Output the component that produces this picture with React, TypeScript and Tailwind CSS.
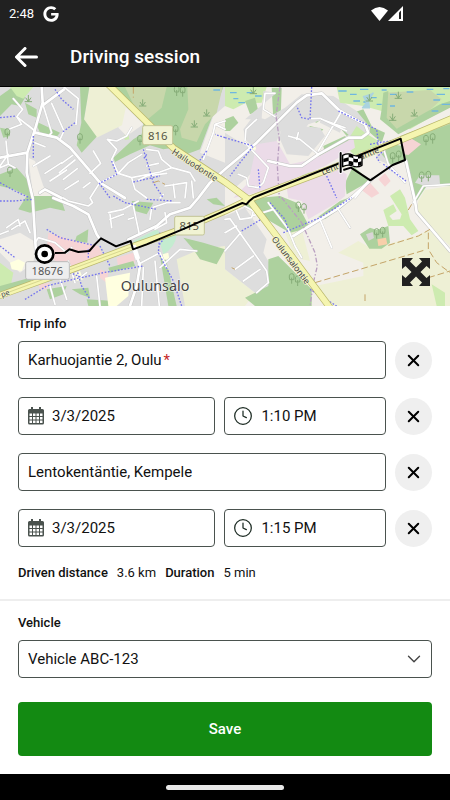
import { useState } from 'react';
import { ChevronDown, Clock, X } from 'lucide-react';
import { FaGoogle } from 'react-icons/fa';

const areas = [
  { fill: '#f2efe9', d: 'M675 3H1350V660H675Z M640 90L675 60V230L600 200Z M375 60L430 115L380 150L355 125Z M85 215L105 225L130 300L160 336H100Z M0 460L60 440L110 470L100 530L60 560L0 500Z' },
  { fill: '#eef0d5', d: 'M268 3H320L378 62L366 118L290 155L252 105Z M530 520L600 490L675 480V660H555Z M675 550L765 620L735 660H675Z M855 440L905 430L930 525L905 520L880 500Z M1015 500L1075 465L1110 485L1165 475L1260 445L1290 430L1350 500V660H985L945 600L1090 570V530Z M1255 345L1275 312L1350 300V480L1290 425L1250 375Z M835 90L895 60L905 110L845 140Z' },
  { fill: '#add19e', d: 'M0 30L35 5H60L75 35L60 60L35 55L0 90Z M75 50L110 70V95L85 85Z M0 125L25 130L30 150L10 155Z M105 105L180 140L170 152L120 140Z M240 3H268L252 100L290 152L245 200L230 178L244 110Z M345 3H670L600 190L560 205L520 185L490 190L450 178L390 205L345 228L340 215L400 160L425 145L432 105Z M0 265L50 245L90 290L95 336L40 310L0 300Z' },
  { fill: '#c8d7ab', d: 'M375 3H500L485 65L440 103L405 65Z M562 3H668L650 80L615 115L590 168L545 155L540 130L565 70Z' },
  { fill: '#cdebb0', d: 'M30 3H100L70 38L50 30Z M675 3H800L785 50L735 52L700 70L675 60Z M0 530L40 560L30 610L0 625Z M370 150L385 145L388 160L375 162Z' },
  { fill: '#add19e', d: 'M815 5H845L842 95L820 100Z M735 45L765 35L775 75L750 85Z M675 100L700 90L715 110L690 135H675Z M905 95L930 60L960 60L990 80L950 110Z M1000 100L1090 70L1115 120L1040 150Z M875 185L930 120L970 130L925 185L900 195Z M970 180L1035 150L1050 165L975 205Z M955 210L990 190L1010 205L960 225Z' },
  { fill: '#dddddd', d: 'M735 100L830 20L790 15L785 100Z M855 65L905 25L1000 30L1070 75L1115 130L1090 145L1050 150L985 95L925 115L880 175L835 160L845 130L830 165L790 205L740 165L730 130L760 90L795 100Z M675 140L770 200L780 240L700 310L675 270Z M840 160L900 120L960 125L975 150L925 210L860 205Z M965 70L1035 90L1020 140L960 110Z M675 390L735 365L800 460L790 500L825 560L820 600L765 620L675 550Z M1130 190L1150 185L1165 235L1130 220Z' },
  { fill: '#cdebb0', d: 'M1010 3H1350V60L1230 130L1145 75L1090 60L1020 50Z M1045 160L1070 120L1095 140L1135 165L1130 195L1070 215L1045 190Z M1150 372L1180 355L1190 375L1168 390L1178 402L1200 400L1205 385L1170 330L1200 310L1215 335L1230 400L1255 435L1235 448L1210 420L1165 420Z M1295 595L1335 620V660H1310Z M900 260L925 250L930 262L905 272Z' },
  { fill: '#c8d7ab', d: 'M1155 20L1290 12L1325 40L1270 90L1190 130L1148 95Z M1200 150L1350 95V120L1215 162Z' },
  { fill: '#add19e', d: 'M1145 70L1150 20L1165 15L1160 95L1190 128L1320 55L1350 45V65L1195 145L1140 100Z M1205 165L1350 115V300L1280 300L1250 345L1235 310L1220 235Z M1110 120L1155 140L1145 170L1110 140Z M1145 205L1175 175L1210 180L1215 225L1175 240Z M1035 290L1060 240L1110 285L1040 325Z M705 350L750 338L840 330L890 350L930 425L870 440L800 400L770 380Z M955 392L1020 345L1060 330L1030 360L975 400Z M1080 445L1110 425L1130 432L1165 420L1170 470L1145 488H1108Z M805 520L835 510L905 580L935 610V660H765L735 635L805 600Z' },
  { fill: '#ebdbe8', d: 'M770 175L830 165L870 235L940 220L1060 155L1065 185L975 240L840 295L790 315L700 336L745 290Z M860 305L1010 245L1040 265L1035 330L1010 350L925 400L905 345L865 336Z M775 195L830 165L832 300L790 290Z' },
  { fill: '#dddddd', d: 'M1245 290L1260 268L1318 268L1320 295L1275 300Z' },
  { fill: '#f6d4d5', d: 'M1205 168L1235 158L1263 175L1225 207L1212 205Z M1080 308L1110 290L1138 322L1115 335Z M1135 280L1155 262L1172 285L1155 302Z M145 440L225 465L295 480L315 520L200 555L160 520L140 490Z M350 515L400 500L405 530L355 545Z M300 550L325 560L320 590L300 575Z M115 595L150 590L140 610H120Z' },
  { fill: '#add19e', d: 'M80 330H180L195 375L150 365L90 380L55 370Z M230 450L265 430L262 470L225 465Z M0 600L90 575L95 590L0 620Z M140 610L200 600L190 625L150 640Z M260 640L345 645V660H265Z M550 455L610 470L675 490L650 535L600 520L580 490Z M620 340L650 335L675 360L640 355Z M480 510L495 508L530 660H505Z M325 545L400 525L405 540L330 560Z M395 345L460 350L440 385L405 375Z M215 610L265 605L270 635L240 625Z' },
  { fill: '#c4ecd0', d: 'M480 470Q500 435 530 448Q525 485 490 505Z M400 465L470 430L480 440L405 478Z' },
  { fill: '#ffffe0', d: 'M315 575L390 560L385 630L350 660H325Z M30 530L55 520L75 530L65 555L35 550Z M745 176L765 172L768 190L750 194Z M488 505L505 500L508 520L490 522Z M225 560L240 555L250 580L230 585Z' },
  { fill: '#d9d5d5', d: 'M1098 445L1118 438L1122 456L1106 464Z' },
  { fill: '#f8cfaa', d: 'M1132 460L1158 455L1162 475L1135 480Z' },
];

const minorStreets = [
  'M40 38L68 70L50 92L105 135L85 118',
  'M50 92L65 115L30 128',
  'M18 165L25 235L0 245 M25 235L45 245 M25 205L0 240',
  'M130 60L155 140L148 148',
  'M155 52L192 135L180 160',
  'M192 3L235 38L228 115',
  'M105 170L135 182',
  'M100 240L150 210 M135 262L185 230 M150 285L200 252 M185 232L218 208 M195 310L235 285 M225 222L178 260 M232 248L190 280 M250 305L270 290',
  'M280 195L302 232L270 262',
  'M322 160L350 190L335 220L355 262L298 292L270 336',
  'M322 160L350 165L380 150L395 125',
  'M355 262L385 230L425 205 M355 262L395 275L405 310L440 336',
  'M440 190L475 195L485 220L515 245L570 260L585 285 M515 245L480 258L395 275',
  'M440 240L475 232 M410 285L440 270L500 262',
  'M495 300L560 290L555 336 M520 295L525 336 M575 285L580 336 M490 325L480 336',
  'M675 105L645 115L640 140L610 220 M645 115L675 130',
  'M270 336L278 350L265 360L205 345L190 336',
  'M35 430L75 405L90 440 M20 425L55 400L60 420 M0 445L25 435',
  'M325 380L370 370L415 345 M335 425L330 385 M400 360L418 445',
  'M450 400L455 365L500 350L540 350 M465 430L500 410L495 380',
  'M205 525L225 590 M180 580L200 640 M240 575L260 560 M415 535L480 500L500 545 M430 545L425 660 M465 525L478 660 M480 545L540 490L590 495 M150 600L165 655 M290 570L300 660',
  'M385 400L400 395 M330 400L370 385 M105 470L115 455L165 470L200 500L215 485',
  'M735 170L805 245L790 290L775 305L745 300L740 275L715 265',
  'M735 165L738 130L770 100 M825 22L795 22L790 70L830 95',
  'M865 150L900 160L955 205 M895 140L890 160 M955 195L1025 75 M965 100L1035 125 M935 98L960 97L1040 135',
  'M675 400L690 398L800 555L805 590L770 620 M675 495L722 440 M705 550L760 510 M730 585L780 550 M675 440L710 420 M720 400L755 395L760 375L715 350 M720 400L705 365 M755 390L820 370',
  'M805 350L865 430L885 480L905 515 M1015 370L1050 425 M960 400L995 485',
  'M1145 170L1165 235L1215 290',
  'M1240 350L1270 300L1350 295',
  'M1065 336L1110 280',
];

const mainStreets = [
  'M125 3L128 50L105 130L82 200L80 260L98 336',
  'M192 10L128 58',
  'M0 215L82 200',
  'M105 140L170 155L210 185L300 290L375 336',
  'M120 320L135 310L185 336',
  'M160 336L220 360L265 385L290 445L300 460',
  'M98 336L108 500',
  'M675 250L630 290L595 336L570 365L510 385L470 420L385 460',
  'M400 480L420 540L410 600L390 660',
  'M675 250L770 170L830 110L890 50L920 28L965 22L1020 75L1095 115L1105 140L1085 155L1045 155L955 205L905 240L870 240L805 225',
  'M880 450L960 400L1010 370L1060 330L1115 280',
  'M1218 225L1245 345L1250 378L1295 430L1350 495',
];

const paths = [
  'M165 10L185 40L220 70 M225 110L185 140 M0 95L50 90 M100 150L100 215',
  'M0 290L45 315L90 336 M355 20L440 105',
  'M335 225L350 265L298 292L330 336 M430 190L445 240L460 290L490 336 M400 288L480 270 M440 205L430 220',
  'M675 155L645 145 M620 195L598 225',
  'M0 345L40 345L100 340 M340 330L375 350L470 370 M440 340L520 345',
  'M140 430L180 455L290 480 M265 490L265 520 M0 480L45 515 M200 555L245 575L310 560L430 540 M75 640L140 600L240 575',
  'M300 480L330 540 M230 550L245 600L270 640 M480 440L475 500L520 585L545 660 M505 440L475 480',
  'M675 155L760 180L720 230L690 270 M775 250L780 310 M935 3L930 100L905 95L890 60 M1015 75L1130 130L1135 170L1130 190',
  'M1110 175L1135 170L1175 165L1130 215L1140 230 M980 270L1010 336 M1150 235L1218 285',
  'M1215 150L1350 100 M725 435L800 390 M850 440L960 395L1055 335 M810 350L855 400L865 430 M930 610L1010 660',
];

const tracks = [
  'M945 590L1275 492 M1285 440V490L1310 530L1350 560 M1285 575L1350 555',
  'M1165 478L1255 450L1290 430 M1235 355L1220 380',
  'M1095 625V645 M460 290L475 285L495 295 M400 3V35 M695 545L705 550',
];

const waterDashes =
  'M640 12H660 M690 20H710 M715 50H735 M740 20H760 M765 30H785 M700 38H715 M1015 15H1040 M1050 25H1070 M1080 10H1105 M1110 35H1130 M1130 55H1145 M1145 12H1160 M1170 25H1190 M1280 10H1300 M1310 25H1335 M1325 55H1350 M1060 45H1080 M1090 48H1105 M1330 8H1348 M1300 42H1320 M1170 60H1185 M1220 18H1240 M1295 75H1315';

const secondaryRoads = [
  'M325 -5L440 108L520 186L675 288L748 342L830 450L990 665',
  'M-5 630L200 556L400 481L560 424L675 375L748 340L1000 245L1250 142L1355 98',
];

const treeSpots = [
  [240, 155], [420, 160], [527, 130], [30, 255], [22, 140], [530, 12], [548, 14],
  [1278, 160], [1298, 155], [1178, 212], [1196, 207], [1265, 270], [1285, 268],
  [895, 360], [912, 365], [875, 575], [893, 582], [1130, 440], [1148, 436],
];

const scrubSpots = [[428, 55], [620, 85], [583, 118], [1178, 98], [1243, 85], [85, 42], [1108, 40], [760, 18], [1195, 32]];

function MapView() {
  return (
    <svg
      viewBox="0 3 1350 657"
      preserveAspectRatio="xMidYMid slice"
      className="block aspect-[450/219] w-full bg-[#dddddd]"
      role="img"
      aria-label="Route map"
      fill="none"
      strokeLinejoin="round"
      fontFamily='"Noto Sans", sans-serif'
    >
      {areas.map((area, i) => (
        <path key={i} d={area.d} fill={area.fill} />
      ))}

      <path d={waterDashes} stroke="#6fb7e0" strokeWidth="4" />
      <path d="M1090 30L1100 50L1088 65H1108L1105 45L1120 20" fill="#aad3df" stroke="#aad3df" strokeWidth="5" />

      {/* Vegetation symbols */}
      <g stroke="#86ad78" strokeWidth="3">
        {treeSpots.map(([x, y]) => (
          <path key={`${x}-${y}`} d={`M${x} ${y + 18}V${y}M${x - 6} ${y + 6}Q${x - 10} ${y - 12} ${x} ${y - 12}Q${x + 10} ${y - 12} ${x + 6} ${y + 6}Z`} />
        ))}
        {scrubSpots.map(([x, y]) => (
          <path key={`${x}-${y}`} d={`M${x - 11} ${y + 5}H${x + 11}M${x} ${y + 5}V${y - 15}M${x} ${y + 5}L${x - 8} ${y - 7}M${x} ${y + 5}L${x + 8} ${y - 7}`} />
        ))}
      </g>

      {/* Streets */}
      <path d={minorStreets.join(' ')} stroke="#cbcbcb" strokeWidth="7" strokeLinecap="round" />
      <path d={mainStreets.join(' ')} stroke="#c4c4c4" strokeWidth="11" strokeLinecap="round" />
      <path d={minorStreets.join(' ')} stroke="#ffffff" strokeWidth="5" strokeLinecap="round" />
      <path d={mainStreets.join(' ')} stroke="#ffffff" strokeWidth="8" strokeLinecap="round" />
      <path d={paths.join(' ')} stroke="#7474ee" strokeWidth="4" strokeDasharray="5 5" />
      <path d={tracks.join(' ')} stroke="#c4a468" strokeWidth="3" strokeDasharray="20 9" />
      <path
        d="M840 3L828 90L838 160L832 240L838 336 M845 335L905 410L945 500L952 540L940 590L930 660"
        stroke="#b99fc0"
        strokeWidth="4"
        strokeDasharray="14 6 4 6"
      />

      {/* Secondary roads */}
      <path d={secondaryRoads.join(' ')} stroke="#b9b76b" strokeWidth="21" />
      <path d={secondaryRoads.join(' ')} stroke="#f5f5b0" strokeWidth="17" />
      <path d="M-5 630L400 481" stroke="#c7c57e" strokeWidth="2" />
      <path d="M400 478L414 520" stroke="#ffffff" strokeWidth="14" />

      {/* Labels */}
      <g fill="#444444" stroke="#f5f5cc" strokeWidth="4" paintOrder="stroke" fontSize="26">
        <text x="514" y="202" transform="rotate(33 514 202)">Hailuodontie</text>
        <text x="814" y="460" transform="rotate(53 814 460)">Oulunsalontie</text>
        <text x="968" y="268" transform="rotate(-22 968 268)">Lentokentäntie</text>
        <text x="6" y="634" transform="rotate(-20 6 634)" fontSize="22">pe</text>
      </g>
      <text x="362" y="615" fontSize="43" fill="#444444" stroke="#ffffff" strokeWidth="5" strokeOpacity="0.6" paintOrder="stroke">
        Oulunsalo
      </text>
      <rect x="428" y="119" width="90" height="57" rx="5" fill="#f1f3d3" stroke="#c3c597" strokeWidth="3" />
      <text x="473" y="161" fontSize="34" textAnchor="middle" fill="#555544">816</text>
      <rect x="524" y="391" width="89" height="56" rx="5" fill="#f1f3d3" stroke="#c3c597" strokeWidth="3" />
      <text x="568" y="432" fontSize="34" textAnchor="middle" fill="#555544">815</text>
      <rect x="77" y="527" width="131" height="53" rx="6" fill="#eeeeee" stroke="#bbbbbb" strokeWidth="3" />
      <text x="142" y="567" fontSize="33" textAnchor="middle" fill="#555555">18676</text>

      {/* Driven route */}
      <path
        d="M165 501L195 500L208 490L235 498L268 495L285 475L303 457L348 481L392 465L399 490L440 475L560 425L675 374L727 351L739 355L748 345L760 335L1202 158L1215 222L1178 237L1111 283L1053 245L1030 252"
        stroke="#000000"
        strokeWidth="6"
      />
      <circle cx="134" cy="504" r="26" fill="#ffffff" stroke="#000000" strokeWidth="8" />
      <circle cx="134" cy="504" r="10" fill="#000000" />

      {/* Finish flag */}
      <path d="M1022 202V258" stroke="#ffffff" strokeWidth="12" strokeLinecap="round" />
      <path d="M1028 208Q1044 200 1058 207T1086 206V238Q1072 246 1058 240T1028 242Z" fill="#ffffff" stroke="#000000" strokeWidth="4" />
      <path d="M1022 201V258" stroke="#000000" strokeWidth="6" strokeLinecap="round" />
      <path
        d="M1046 205Q1052 204 1060 208V217Q1052 213 1046 214Z M1074 209L1085 206V216L1074 218Z M1030 218L1046 214V225L1030 229Z M1060 217Q1066 221 1074 218V229Q1066 230 1060 228Z M1046 225Q1052 224 1060 228V238Q1052 235 1046 237Z M1074 229L1085 226V236L1074 240Z"
        fill="#000000"
      />
    </svg>
  );
}

function CalendarIcon() {
  return (
    <svg viewBox="0 0 16 18" className="h-[18px] w-4 shrink-0" aria-hidden="true">
      <path
        fill="#4a524e"
        fillRule="evenodd"
        d="M3 0h2v2h6V0h2v2h1.500a1.500 1.500 0 0 1 1.500 1.500V16a1.500 1.500 0 0 1-1.500 1.500h-13A1.500 1.500 0 0 1 0 16V3.500A1.500 1.500 0 0 1 1.500 2H3ZM1.500 6.500v2.500H4V6.500ZM5 6.500v2.500h2.500V6.500ZM8.500 6.500v2.500H11V6.500ZM12 6.500v2.500h2.500V6.500ZM1.500 10v2.500H4V10ZM5 10v2.500h2.500V10ZM8.500 10v2.500H11V10ZM12 10v2.500h2.500V10ZM1.500 13.500V16H4v-2.500ZM5 13.500V16h2.500v-2.500ZM8.500 13.500V16H11v-2.500ZM12 13.500V16h2.500v-2.500Z"
      />
    </svg>
  );
}

const boxClass = 'flex h-[38px] min-w-0 items-center rounded border border-[#4a524e] bg-white px-[9px]';

function ClearButton({ label, onClick }: { label: string; onClick: () => void }) {
  return (
    <button
      type="button"
      aria-label={label}
      onClick={onClick}
      className="flex size-[37px] shrink-0 items-center justify-center rounded-full bg-[#efefef] text-black"
    >
      <X size={19} strokeWidth={2.5} />
    </button>
  );
}

interface AddressRowProps {
  label: string;
  value: string;
  required?: boolean;
  onChange: (value: string) => void;
}

function AddressRow({ label, value, required, onChange }: AddressRowProps) {
  return (
    <div className="flex items-center gap-[9px]">
      <label className={`${boxClass} flex-1`}>
        <input
          type="text"
          aria-label={label}
          value={value}
          required={required}
          onChange={(e) => onChange(e.target.value)}
          className="field-sizing-content min-w-4 max-w-full outline-none"
        />
        {required && <span className="pl-[2px] text-[#c62828]">*</span>}
      </label>
      <ClearButton label={`Clear ${label}`} onClick={() => onChange('')} />
    </div>
  );
}

interface TimeRowProps {
  label: string;
  date: string;
  time: string;
  onChange: (date: string, time: string) => void;
}

function TimeRow({ label, date, time, onChange }: TimeRowProps) {
  return (
    <div className="flex items-center gap-[9px]">
      <div className="grid min-w-0 flex-1 grid-cols-[11fr_9fr] gap-[9px]">
        <label className={`${boxClass} gap-2`}>
          <CalendarIcon />
          <input
            type="text"
            aria-label={`${label} date`}
            value={date}
            onChange={(e) => onChange(e.target.value, time)}
            className="w-full min-w-0 outline-none"
          />
        </label>
        <label className={`${boxClass} gap-2`}>
          <Clock size={20} strokeWidth={1.5} className="-ml-px shrink-0 text-[#1c2b23]" />
          <input
            type="text"
            aria-label={`${label} time`}
            value={time}
            onChange={(e) => onChange(date, e.target.value)}
            className="w-full min-w-0 outline-none"
          />
        </label>
      </div>
      <ClearButton label={`Clear ${label} time`} onClick={() => onChange('', '')} />
    </div>
  );
}

export default function App() {
  const [from, setFrom] = useState('Karhuojantie 2, Oulu');
  const [to, setTo] = useState('Lentokentäntie, Kempele');
  const [start, setStart] = useState({ date: '3/3/2025', time: '1:10 PM' });
  const [end, setEnd] = useState({ date: '3/3/2025', time: '1:15 PM' });

  return (
    <div className="flex min-h-screen flex-col bg-white font-[Roboto,sans-serif] text-[15px] text-[#111111]">
      <header className="border-b border-black bg-[#212121] text-white">
        {/* Status bar */}
        <div className="flex h-7 items-center pr-[46px] pl-[9px]">
          <span className="text-[13px]">2:48</span>
          <FaGoogle className="ml-[9px] size-4" />
          <svg viewBox="0 0 33 16" className="ml-auto h-4 w-[33px]" aria-hidden="true">
            <path d="M0 4.500Q8.500-2.500 17 4.500L8.500 15Z" fill="#fff" />
            <path d="M17 15L32 0V15Z" fill="#fff" />
            <path d="M28 6.500L30 4.500V13H28Z" fill="#212121" />
          </svg>
        </div>

        {/* Title bar */}
        <div className="flex h-[58px] items-center gap-8 pl-[15px]">
          <button type="button" aria-label="Back">
            <svg viewBox="0 0 23 20" className="block h-5 w-[23px]" fill="none" stroke="currentColor" strokeWidth="3" strokeLinecap="round" strokeLinejoin="round">
              <path d="M10 1.500L1.500 10L10 18.500M2 10H21.500" />
            </svg>
          </button>
          <h1 className="text-[19px] font-medium">Driving session</h1>
        </div>
      </header>

      <div className="relative">
        <MapView />
        <button type="button" aria-label="Expand map" className="absolute right-5 bottom-5 text-[#212121]">
          <svg viewBox="0 0 28 28" className="block size-7" aria-hidden="true">
            <path
              d="M0 0H11L8 3.500L14 9.500L20 3.500L17 0H28V11L24.500 8L18.500 14L24.500 20L28 17V28H17L20 24.500L14 18.500L8 24.500L11 28H0V17L3.500 20L9.500 14L3.500 8L0 11Z"
              fill="currentColor"
            />
          </svg>
        </button>
      </div>

      <form className="flex flex-1 flex-col" onSubmit={(e) => e.preventDefault()}>
        {/* Trip info */}
        <section className="border-b-2 border-[#eeeeee] px-[18px] pt-2 pb-4">
          <h2 className="mb-[7px] text-[13px] leading-5 font-medium">Trip info</h2>
          <div className="flex flex-col gap-[18px]">
            <AddressRow label="start address" value={from} required onChange={setFrom} />
            <TimeRow label="start" date={start.date} time={start.time} onChange={(date, time) => setStart({ date, time })} />
            <AddressRow label="end address" value={to} onChange={setTo} />
            <TimeRow label="end" date={end.date} time={end.time} onChange={(date, time) => setEnd({ date, time })} />
          </div>
          <dl className="mt-4 flex gap-[9px] text-[13px] leading-5">
            <dt className="font-medium">Driven distance</dt>
            <dd>3.6 km</dd>
            <dt className="font-medium">Duration</dt>
            <dd>5 min</dd>
          </dl>
        </section>

        {/* Vehicle */}
        <section className="px-[18px] pt-3 pb-[18px]">
          <label htmlFor="vehicle" className="mb-[7px] block text-[13px] leading-5 font-medium">
            Vehicle
          </label>
          <div className="relative">
            <select
              id="vehicle"
              className="h-[38px] w-full appearance-none rounded border border-[#4a524e] bg-white px-[9px] outline-none"
            >
              <option>Vehicle ABC-123</option>
            </select>
            <ChevronDown size={22} strokeWidth={1.5} className="pointer-events-none absolute top-2 right-[7px] text-[#444444]" />
          </div>
          <button type="submit" className="mt-6 h-[54px] w-full rounded bg-[#138a12] font-medium text-white">
            Save
          </button>
        </section>
      </form>

      <footer className="flex h-[26px] items-center justify-center bg-black">
        <span className="h-[5px] w-[118px] rounded-full bg-[#e8e8e8]" />
      </footer>
    </div>
  );
}
